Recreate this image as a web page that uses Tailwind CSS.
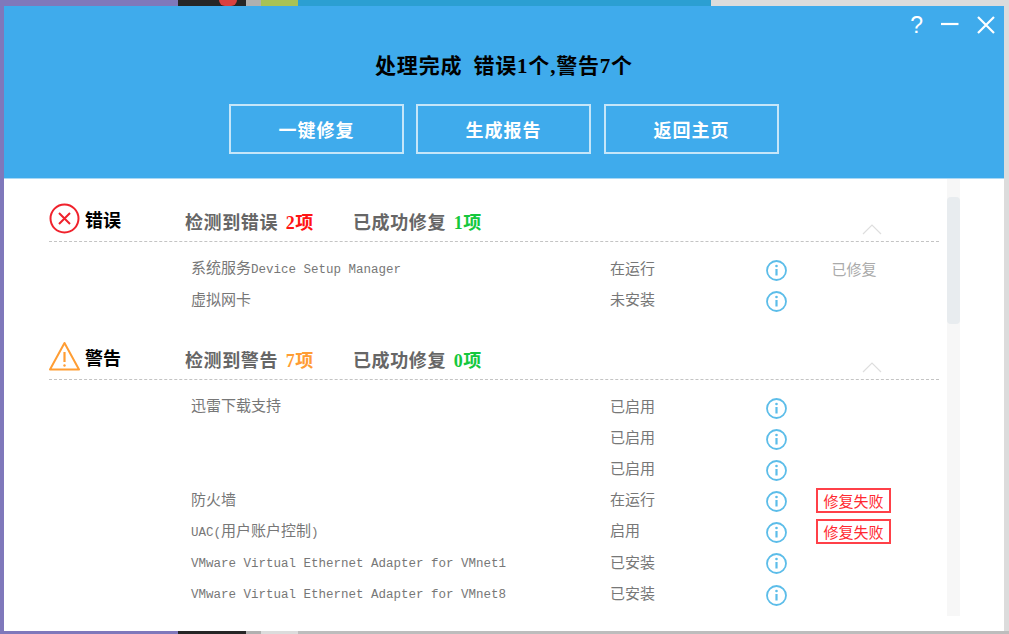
<!DOCTYPE html>
<html lang="zh-CN">
<head>
    <meta charset="UTF-8">
    <title>处理完成</title>
    <script src="https://cdn.jsdelivr.net/npm/@tailwindcss/browser@4"></script>
</head>
<body class="overflow-hidden">
    <!-- Desktop behind the window -->
    <div class="relative w-[1009px] h-[634px] overflow-hidden bg-[#dcdcdc] font-['Noto_Sans_CJK_SC',sans-serif]">
        <div class="absolute left-0 top-0 w-[178px] h-[634px] bg-[#7f78bb]"></div>
        <div class="absolute left-[178px] top-0 w-[68px] h-[634px] bg-[#262626]"></div>
        <div class="absolute left-[219px] top-0 w-[18px] h-[6px] rounded-b-full bg-[#d9403f]"></div>
        <div class="absolute left-[246px] top-0 w-[15px] h-[634px] bg-[#b0b0b0]"></div>
        <div class="absolute left-[261px] top-0 w-[37px] h-[6px] bg-[#a9c256]"></div>
        <div class="absolute left-[298px] top-0 w-[413px] h-[6px] bg-[#2b9fd2]"></div>
        <div class="absolute left-[298px] top-[631px] w-[711px] h-[3px] bg-[#bdbdbd]"></div>

        <!-- Window -->
        <div class="absolute left-[4px] top-[6px] w-[1000px] h-[625px] bg-white flex flex-col overflow-hidden">
            <!-- Blue header -->
            <header class="relative h-[173px] shrink-0 bg-[#3fabec] border-b border-[#a9d8f5] flex flex-col items-center pt-[44px]">
                <h1 class="text-[21px] leading-[28px] font-bold text-black tracking-[0.8px]">处理完成&nbsp; 错误<span class="font-['Liberation_Serif']">1</span>个<span class="font-['Liberation_Serif']">,</span>警告<span class="font-['Liberation_Serif']">7</span>个</h1>
                <div class="flex gap-3 mt-[24px]">
                    <button class="w-[175px] h-[50px] border-2 border-white/70 text-white text-[18px] font-bold tracking-[1px]">一键修复</button>
                    <button class="w-[175px] h-[50px] border-2 border-white/70 text-white text-[18px] font-bold tracking-[1px]">生成报告</button>
                    <button class="w-[175px] h-[50px] border-2 border-white/70 text-white text-[18px] font-bold tracking-[1px] ml-px">返回主页</button>
                </div>
                <!-- Window controls -->
                <div class="absolute right-[9px] top-[9px] flex items-center gap-[18px] text-white">
                    <span class="text-[23px] leading-[20px] font-['Liberation_Sans']">?</span>
                    <svg class="w-[18px] h-[18px]" viewBox="0 0 18 18"><path d="M0 8h17.500" stroke="currentColor" stroke-width="2.200"/></svg>
                    <svg class="w-[18px] h-[18px]" viewBox="0 0 18 18"><path d="M1 1l16 16M17 1L1 17" stroke="currentColor" stroke-width="2.200"/></svg>
                </div>
            </header>

            <!-- Result list -->
            <main class="flex-1 flex min-h-0">
                <div class="w-[943px] pl-[45px] pr-[8px] text-[15px] text-[#777]">
                    <!-- Errors -->
                    <section>
                        <div class="h-[63px] flex items-end pb-[5px] border-b border-dashed border-[#c4c4c4]">
                            <div class="w-[136px] flex items-center gap-[5px] mb-[2px] text-black text-[18px] leading-[30px] font-bold">
                                <svg class="w-[31px] h-[31px]" viewBox="0 0 31 31" fill="none" stroke="#f0222c" stroke-width="2"><circle cx="15.500" cy="15.500" r="14"/><path d="M10 10l11 11M21 10L10 21"/></svg>
                                错误
                            </div>
                            <div class="w-[169px] text-[18px] leading-[26px] font-bold text-[#666] tracking-[0.6px]">检测到错误 <span class="ml-[3px] text-[#ff1414]"><span class="font-['Liberation_Serif']">2</span>项</span></div>
                            <div class="-ml-px text-[18px] leading-[26px] font-bold text-[#666] tracking-[0.6px]">已成功修复 <span class="ml-[3px] text-[#14c83c]"><span class="font-['Liberation_Serif']">1</span>项</span></div>
                            <svg class="ml-auto mr-[57px] mb-[1px] w-[20px] h-[12px]" viewBox="0 0 20 12" fill="none" stroke="#dedede" stroke-width="1.200"><path d="M1 11L10 2l9 9"/></svg>
                        </div>
                        <div class="pt-[12px]">
                            <div class="grid grid-cols-[142px_419px_156px_20px_136px] items-center h-[31px]">
                                <div></div>
                                <div class="pb-[4px]">系统服务<span class="font-['Liberation_Mono'] text-[12.500px]">Device Setup Manager</span></div>
                                <div class="pb-[2px]">在运行</div>
                                <svg class="w-[21px] h-[21px] mt-[2px]" viewBox="0 0 21 21" fill="none" stroke="#5cbde9"><circle cx="10.500" cy="10.500" r="9.500" stroke-width="1.800"/><path d="M10.500 9v6.500" stroke-width="2.200"/><circle cx="10.500" cy="6" r="1.300" fill="#5cbde9" stroke="none"/></svg>
                                <div class="text-center text-[#aaa]">已修复</div>
                            </div>
                            <div class="grid grid-cols-[142px_419px_156px_20px_136px] items-center h-[31px]">
                                <div></div>
                                <div class="pb-[2px]">虚拟网卡</div>
                                <div class="pb-[2px]">未安装</div>
                                <svg class="w-[21px] h-[21px] mt-[2px]" viewBox="0 0 21 21" fill="none" stroke="#5cbde9"><circle cx="10.500" cy="10.500" r="9.500" stroke-width="1.800"/><path d="M10.500 9v6.500" stroke-width="2.200"/><circle cx="10.500" cy="6" r="1.300" fill="#5cbde9" stroke="none"/></svg>
                                <div></div>
                            </div>
                        </div>
                    </section>

                    <!-- Warnings -->
                    <section>
                        <div class="h-[64px] flex items-end pb-[5px] border-b border-dashed border-[#c4c4c4]">
                            <div class="w-[136px] flex items-center gap-[5px] mb-[2px] text-black text-[18px] leading-[30px] font-bold">
                                <svg class="w-[31px] h-[31px]" viewBox="0 0 31 31" fill="none" stroke="#ff9d33" stroke-width="2" stroke-linejoin="round"><path d="M15.500 2L30 28.500H1z"/><path d="M15.500 11v10" stroke-width="2.200"/><circle cx="15.500" cy="24.500" r="1.200" fill="#ff9d33" stroke="none"/></svg>
                                警告
                            </div>
                            <div class="w-[169px] text-[18px] leading-[26px] font-bold text-[#666] tracking-[0.6px]">检测到警告 <span class="ml-[3px] text-[#ff9d33]"><span class="font-['Liberation_Serif']">7</span>项</span></div>
                            <div class="-ml-px text-[18px] leading-[26px] font-bold text-[#666] tracking-[0.6px]">已成功修复 <span class="ml-[3px] text-[#14c83c]"><span class="font-['Liberation_Serif']">0</span>项</span></div>
                            <svg class="ml-auto mr-[57px] mb-[1px] w-[20px] h-[12px]" viewBox="0 0 20 12" fill="none" stroke="#dedede" stroke-width="1.200"><path d="M1 11L10 2l9 9"/></svg>
                        </div>
                        <div class="pt-[12px]">
                            <div class="grid grid-cols-[142px_419px_156px_20px_136px] items-center h-[31px]">
                                <div></div>
                                <div class="pb-[4px]">迅雷下载支持</div>
                                <div class="pb-[2px]">已启用</div>
                                <svg class="w-[21px] h-[21px] mt-[2px]" viewBox="0 0 21 21" fill="none" stroke="#5cbde9"><circle cx="10.500" cy="10.500" r="9.500" stroke-width="1.800"/><path d="M10.500 9v6.500" stroke-width="2.200"/><circle cx="10.500" cy="6" r="1.300" fill="#5cbde9" stroke="none"/></svg>
                                <div></div>
                            </div>
                            <div class="grid grid-cols-[142px_419px_156px_20px_136px] items-center h-[31px]">
                                <div></div>
                                <div></div>
                                <div class="pb-[2px]">已启用</div>
                                <svg class="w-[21px] h-[21px] mt-[2px]" viewBox="0 0 21 21" fill="none" stroke="#5cbde9"><circle cx="10.500" cy="10.500" r="9.500" stroke-width="1.800"/><path d="M10.500 9v6.500" stroke-width="2.200"/><circle cx="10.500" cy="6" r="1.300" fill="#5cbde9" stroke="none"/></svg>
                                <div></div>
                            </div>
                            <div class="grid grid-cols-[142px_419px_156px_20px_136px] items-center h-[31px]">
                                <div></div>
                                <div></div>
                                <div class="pb-[2px]">已启用</div>
                                <svg class="w-[21px] h-[21px] mt-[2px]" viewBox="0 0 21 21" fill="none" stroke="#5cbde9"><circle cx="10.500" cy="10.500" r="9.500" stroke-width="1.800"/><path d="M10.500 9v6.500" stroke-width="2.200"/><circle cx="10.500" cy="6" r="1.300" fill="#5cbde9" stroke="none"/></svg>
                                <div></div>
                            </div>
                            <div class="grid grid-cols-[142px_419px_156px_20px_136px] items-center h-[31px]">
                                <div></div>
                                <div class="pb-[2px]">防火墙</div>
                                <div class="pb-[2px]">在运行</div>
                                <svg class="w-[21px] h-[21px] mt-[2px]" viewBox="0 0 21 21" fill="none" stroke="#5cbde9"><circle cx="10.500" cy="10.500" r="9.500" stroke-width="1.800"/><path d="M10.500 9v6.500" stroke-width="2.200"/><circle cx="10.500" cy="6" r="1.300" fill="#5cbde9" stroke="none"/></svg>
                                <div class="justify-self-center mr-[1px] w-[75px] h-[25px] border-2 border-[#ff4048] text-[#ff2a32] leading-[21px] text-center">修复失败</div>
                            </div>
                            <div class="grid grid-cols-[142px_419px_156px_20px_136px] items-center h-[31px]">
                                <div></div>
                                <div class="pb-[2px]"><span class="font-['Liberation_Mono'] text-[12.500px]">UAC(</span>用户账户控制<span class="font-['Liberation_Mono'] text-[12.500px]">)</span></div>
                                <div class="pb-[2px]">启用</div>
                                <svg class="w-[21px] h-[21px] mt-[2px]" viewBox="0 0 21 21" fill="none" stroke="#5cbde9"><circle cx="10.500" cy="10.500" r="9.500" stroke-width="1.800"/><path d="M10.500 9v6.500" stroke-width="2.200"/><circle cx="10.500" cy="6" r="1.300" fill="#5cbde9" stroke="none"/></svg>
                                <div class="justify-self-center mr-[1px] w-[75px] h-[25px] border-2 border-[#ff4048] text-[#ff2a32] leading-[21px] text-center">修复失败</div>
                            </div>
                            <div class="grid grid-cols-[142px_419px_156px_20px_136px] items-center h-[31px]">
                                <div></div>
                                <div class="pt-[3px] font-['Liberation_Mono'] text-[12.500px]">VMware Virtual Ethernet Adapter for VMnet1</div>
                                <div>已安装</div>
                                <svg class="w-[21px] h-[21px] mt-[2px]" viewBox="0 0 21 21" fill="none" stroke="#5cbde9"><circle cx="10.500" cy="10.500" r="9.500" stroke-width="1.800"/><path d="M10.500 9v6.500" stroke-width="2.200"/><circle cx="10.500" cy="6" r="1.300" fill="#5cbde9" stroke="none"/></svg>
                                <div></div>
                            </div>
                            <div class="grid grid-cols-[142px_419px_156px_20px_136px] items-center h-[31px]">
                                <div></div>
                                <div class="pt-[3px] font-['Liberation_Mono'] text-[12.500px]">VMware Virtual Ethernet Adapter for VMnet8</div>
                                <div>已安装</div>
                                <svg class="w-[21px] h-[21px] mt-[4px]" viewBox="0 0 21 21" fill="none" stroke="#5cbde9"><circle cx="10.500" cy="10.500" r="9.500" stroke-width="1.800"/><path d="M10.500 9v6.500" stroke-width="2.200"/><circle cx="10.500" cy="6" r="1.300" fill="#5cbde9" stroke="none"/></svg>
                                <div></div>
                            </div>
                        </div>
                    </section>
                </div>

                <!-- Scrollbar -->
                <div class="w-[13px] h-[437px] bg-[#f7f7f7] pt-[18px]">
                    <div class="h-[127px] rounded-[4px] bg-[#e8ecef]"></div>
                </div>
            </main>
        </div>
    </div>
</body>
</html>
